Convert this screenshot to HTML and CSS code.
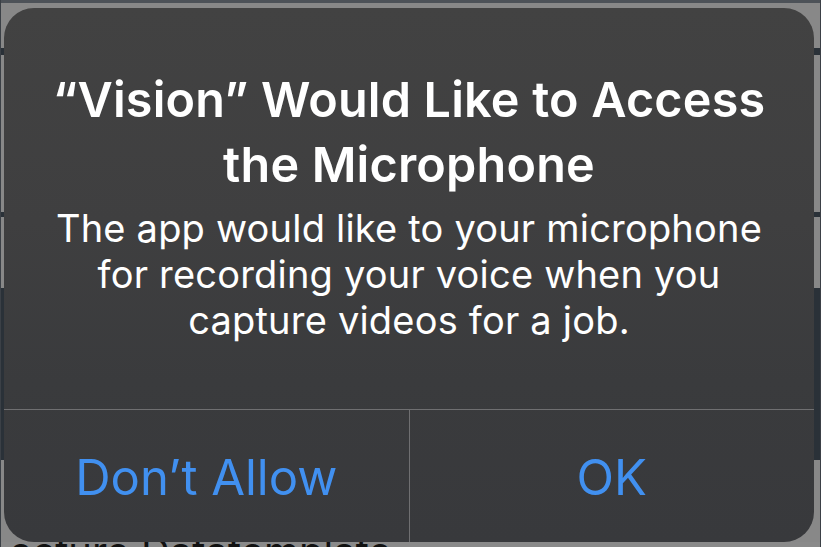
FILE: index.html
```html
<!DOCTYPE html>
<html>
<head>
<meta charset="utf-8">
<link rel="stylesheet" href="styles.css">
</head>
<body>
<div class="page">
  <div class="band topbar"></div>
  <div class="band gray h45"></div>
  <div class="band dark h7"></div>
  <div class="band gray h157"></div>
  <div class="band dark h5"></div>
  <div class="band gray h71"></div>
  <div class="band dark h172"></div>
  <div class="band gray h82"></div>
  <div class="band gray tail"><div class="tail-text">ecture Datatemplate</div></div>
</div>
<div class="alert">
  <div class="alert-body">
    <div class="title">“Vision” Would Like to Access<br>the Microphone</div>
    <div class="message">The app would like to your microphone<br>for recording your voice when you<br>capture videos for a job.</div>
  </div>
  <div class="actions">
    <div class="btn">Don’t Allow</div>
    <div class="btn">OK</div>
  </div>
</div>
</body>
</html>
```

FILE: styles.css
```css
html, body {
  margin: 0;
  padding: 0;
  width: 821px;
  height: 547px;
  overflow: hidden;
  background: #888888;
}
.page {
  display: flex;
  flex-direction: column;
  width: 821px;
  height: 547px;
  border-left: 1px solid #3b4046;
  border-right: 1px solid #3b4046;
  box-sizing: border-box;
}
.band { flex: none; width: 100%; }
.topbar { height: 3px; background: #4d5258; }
.gray { background: #888888; }
.dark { background: #2a3138; }
.h45 { height: 45px; }
.h7 { height: 7px; }
.h157 { height: 157px; }
.h5 { height: 5px; }
.h71 { height: 71px; }
.h172 { height: 172px; }
.h82 { height: 82px; }
.tail {
  height: 5px;
  overflow: hidden;
  background: #8a8a8a;
}
.tail-text {
  margin-top: -10px;
  padding-left: 8px;
  font-family: Inter, "Liberation Sans", sans-serif;
  font-size: 40px;
  line-height: 40px;
  color: #111;
}
.alert {
  position: absolute;
  left: 4px;
  top: 8px;
  width: 810px;
  height: 534px;
  border-radius: 30px;
  background: linear-gradient(180deg, #424242 0%, #3f3f40 40%, #3a3b3d 70%, #38393c 100%);
  display: flex;
  flex-direction: column;
  overflow: hidden;
  font-family: Inter, "Liberation Sans", sans-serif;
  color: #ffffff;
}
.alert-body {
  flex: none;
  height: 402px;
  box-sizing: border-box;
  padding-top: 59px;
  text-align: center;
  border-bottom: 1px solid #6f6f71;
}
.title {
  font-size: 48.5px;
  font-weight: 600;
  line-height: 65px;
  letter-spacing: 0.2px;
}
.message {
  margin-top: 8px;
  font-size: 38px;
  font-weight: 400;
  line-height: 46px;
  letter-spacing: 0.2px;
}
.actions {
  flex: 1;
  display: flex;
}
.btn {
  flex: 1;
  display: flex;
  align-items: center;
  justify-content: center;
  font-size: 49px;
  color: #4190f0;
  padding-top: 3px;
}
.btn + .btn { border-left: 1px solid #6f6f71; }
```
